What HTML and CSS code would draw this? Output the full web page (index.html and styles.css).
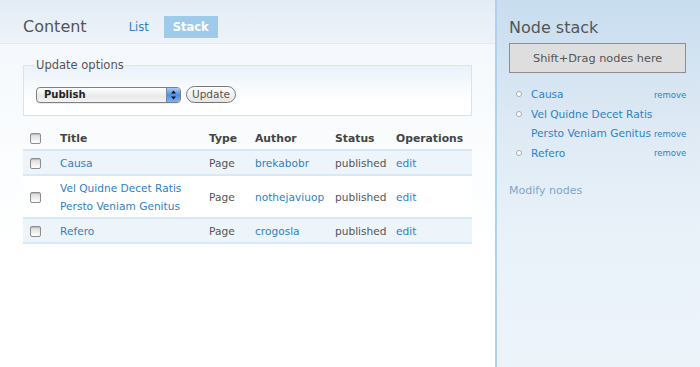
FILE: index.html
```html
<!DOCTYPE html>
<html>
<head>
<meta charset="utf-8">
<link rel="stylesheet" href="styles.css">
</head>
<body>
<div class="page">
  <div class="main">
    <div class="header">
      <h1 class="title">Content</h1>
      <nav class="tabs">
        <a class="tab">List</a>
        <a class="tab active">Stack</a>
      </nav>
    </div>
    <div class="body">
      <fieldset class="options">
        <legend>Update options</legend>
        <div class="controls">
          <span class="select"><span class="select-label">Publish</span><span class="select-arrows"><svg width="7" height="10" viewBox="0 0 7 10"><path d="M3.5 0.5 L6 3.5 H1 Z M3.5 9.5 L6 6.5 H1 Z" fill="#111"/></svg></span></span>
          <button class="btn">Update</button>
        </div>
      </fieldset>
      <table class="grid">
        <colgroup>
          <col class="w-check"><col class="w-title"><col class="w-type"><col class="w-author"><col class="w-status"><col class="w-ops">
        </colgroup>
        <thead>
          <tr>
            <th class="c-check"><span class="cb"></span></th>
            <th>Title</th>
            <th>Type</th>
            <th>Author</th>
            <th>Status</th>
            <th>Operations</th>
          </tr>
        </thead>
        <tbody>
          <tr class="odd">
            <td class="c-check"><span class="cb"></span></td>
            <td><a>Causa</a></td>
            <td>Page</td>
            <td><a>brekabobr</a></td>
            <td>published</td>
            <td><a>edit</a></td>
          </tr>
          <tr class="even">
            <td class="c-check"><span class="cb"></span></td>
            <td><a>Vel Quidne Decet Ratis Persto Veniam Genitus</a></td>
            <td>Page</td>
            <td><a>nothejaviuop</a></td>
            <td>published</td>
            <td><a>edit</a></td>
          </tr>
          <tr class="odd">
            <td class="c-check"><span class="cb"></span></td>
            <td><a>Refero</a></td>
            <td>Page</td>
            <td><a>crogosla</a></td>
            <td>published</td>
            <td><a>edit</a></td>
          </tr>
        </tbody>
      </table>
    </div>
  </div>
  <aside class="side">
    <h2 class="side-title">Node stack</h2>
    <div class="drop">Shift+Drag nodes here</div>
    <ul class="stack">
      <li><span class="dot"></span><a class="name">Causa</a><a class="remove">remove</a></li>
      <li><span class="dot"></span><a class="name">Vel Quidne Decet Ratis Persto Veniam Genitus</a><a class="remove">remove</a></li>
      <li><span class="dot"></span><a class="name">Refero</a><a class="remove">remove</a></li>
    </ul>
    <a class="modify">Modify nodes</a>
  </aside>
</div>
</body>
</html>
```
FILE: styles.css
```css
html, body { margin: 0; padding: 0; height: 100%; }
body { font-family: "DejaVu Sans", Verdana, sans-serif; font-size: 11px; color: #555; }
a { color: #2d82c6; text-decoration: none; }
.page { display: flex; height: 367px; overflow: hidden; }
.main { width: 495px; flex: none; background: linear-gradient(#f4f8fc 44px, #fbfdfe 160px, #fff 260px); }
.header { height: 34px; padding-top: 9px; border-bottom: 1px solid #e2e9ef; background: linear-gradient(#e3ecf6, #edf3f9); display: flex; align-items: center; padding-left: 23px; }
.title { margin: 0; font-weight: normal; font-size: 16px; color: #555; }
.tabs { display: flex; align-items: center; margin-left: 42px; margin-top: 1px; }
.tab { font-size: 11.5px; color: #2d82c6; }
.tab.active { margin-left: 15px; background: #9fcbea; color: #fff; font-weight: bold; padding: 4px 9px 4px; }
.body { padding: 0 23px; }
.options { margin: 14px 0 0; padding: 4px 12px 12px; border: 1px solid #d3e4f2; background: linear-gradient(#eaf2fa, #fff 70%); min-width: 0; }
.options legend { padding: 0 1px; font-size: 11.5px; color: #555; margin-left: -1px; }
.controls { display: flex; align-items: center; gap: 5px; margin-top: 10px; }
.select { display: inline-flex; align-items: center; width: 143px; height: 14px; border: 1px solid #7f7f7f; border-radius: 4px; background: linear-gradient(#fff, #e9e9e9 60%, #f4f4f4); box-shadow: 0 1px 0 rgba(0,0,0,0.08); overflow: hidden; }
.select-label { flex: 1; padding-left: 7px; font-size: 10px; font-weight: bold; color: #222; }
.select-arrows { width: 13px; height: 100%; display: flex; align-items: center; justify-content: center; background: linear-gradient(#a8cdf3, #4d8fe0 50%, #7db3ee); border-left: 1px solid #6a8cb6; }
.btn { height: 17px; padding: 0 5px; border: 1px solid #777; border-radius: 9px; background: linear-gradient(#fff, #e4e4e4); font-family: "DejaVu Sans", Verdana, sans-serif; font-size: 10.5px; color: #555; line-height: 15px; }
.grid { width: 449px; table-layout: fixed; border-collapse: collapse; margin-top: 10px; }
.w-check { width: 37px; }
.w-title { width: 149px; }
.w-type { width: 46px; }
.w-author { width: 80px; }
.w-status { width: 61px; }
.w-ops { width: 76px; }
.grid th { text-align: left; font-weight: bold; color: #444; font-size: 10.8px; padding: 5px 0 4px; height: 14px; white-space: nowrap; }
.grid td { padding: 3px 0 2px; line-height: 18px; font-size: 10.6px; color: #555; }
.grid td:nth-child(2) { padding-right: 18px; }
.grid tbody tr { border-top: 2px solid #d8e8f5; }
.grid tbody tr:last-child { border-bottom: 2px solid #d8e8f5; }
.grid tr.odd { background: #edf4fa; }
.grid tr.even { background: #fff; }
.grid .c-check { padding-left: 7px; }
.cb { display: block; width: 9px; height: 9px; border: 1px solid #8d8d8d; border-radius: 2px; background: linear-gradient(#d8d8d8, #fff); box-shadow: inset 0 1px 1px rgba(0,0,0,0.15); }
.side { flex: 1; border-left: 2px solid #b1d0e9; background: linear-gradient(#c8ddef, #dde9f4 120px, #eaf2f9 240px, #ecf3f9); padding: 0 16px 0 12px; }
.side-title { margin: 18px 0 0; font-weight: normal; font-size: 16px; color: #555; }
.drop { margin-top: 6px; height: 28px; border: 1px solid #8e8e8e; background: #dedede; display: flex; align-items: center; justify-content: center; font-size: 11.3px; color: #555; }
.stack { list-style: none; margin: 12px 0 0; padding: 0; }
.stack li { display: flex; align-items: flex-end; line-height: 19.5px; }
.dot { align-self: flex-start; margin: 6px 9px 0 7px; width: 4px; height: 4px; border: 1px solid #aaa; border-radius: 50%; background: #fff; flex: none; }
.name { font-size: 10.6px; width: 123px; flex: none; }
.remove { margin-left: auto; font-size: 8.5px; line-height: 19px; }
.modify { display: block; margin-top: 21px; color: #7ea6c8; font-size: 11px; }
```
